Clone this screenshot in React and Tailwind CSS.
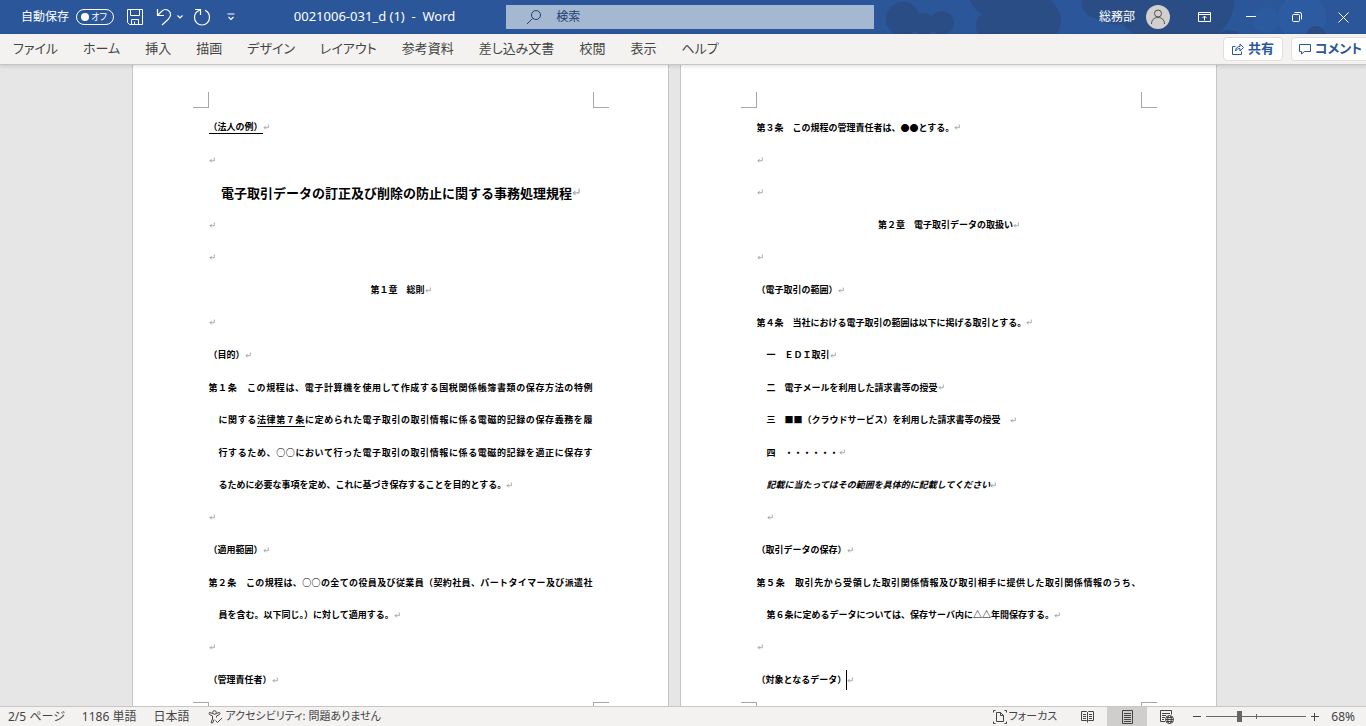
import { useState } from "react";

const TABS = [
  "ファイル",
  "ホーム",
  "挿入",
  "描画",
  "デザイン",
  "レイアウト",
  "参考資料",
  "差し込み文書",
  "校閲",
  "表示",
  "ヘルプ",
];

// full: the line runs on to the next one, so it fills the column
const PAGE_ONE = [
  { text: "（法人の例）", underline: true },
  {},
  { text: "電子取引データの訂正及び削除の防止に関する事務処理規程", title: true },
  {},
  {},
  { text: "第１章　総則", center: true },
  {},
  { text: "（目的）" },
  { text: "第１条　この規程は、電子計算機を使用して作成する国税関係帳簿書類の保存方法の特例", full: true },
  {
    text: (
      <>
        に関する<u className="underline-offset-3">法律第７条</u>に定められた電子取引の取引情報に係る電磁的記録の保存義務を履
      </>
    ),
    full: true,
    indent: true,
  },
  { text: "行するため、○○において行った電子取引の取引情報に係る電磁的記録を適正に保存す", full: true, indent: true },
  { text: "るために必要な事項を定め、これに基づき保存することを目的とする。", indent: true },
  {},
  { text: "（適用範囲）" },
  { text: "第２条　この規程は、○○の全ての役員及び従業員（契約社員、パートタイマー及び派遣社", full: true },
  { text: "員を含む。以下同じ。）に対して適用する。", indent: true },
  {},
  { text: "（管理責任者）" },
];

const PAGE_TWO = [
  { text: "第３条　この規程の管理責任者は、●●とする。" },
  {},
  {},
  { text: "第２章　電子取引データの取扱い", center: true },
  {},
  { text: "（電子取引の範囲）" },
  { text: "第４条　当社における電子取引の範囲は以下に掲げる取引とする。" },
  { text: "一　ＥＤＩ取引", indent: true },
  { text: "二　電子メールを利用した請求書等の授受", indent: true },
  { text: "三　■■（クラウドサービス）を利用した請求書等の授受　", indent: true },
  { text: "四　・・・・・・", indent: true },
  { text: "記載に当たってはその範囲を具体的に記載してください", indent: true, italic: true },
  { indent: true },
  { text: "（取引データの保存）" },
  { text: "第５条　取引先から受領した取引関係情報及び取引相手に提供した取引関係情報のうち、", full: true },
  { text: "第６条に定めるデータについては、保存サーバ内に△△年間保存する。", indent: true },
  {},
  { text: "（対象となるデータ）", caret: true },
];

function Icon({ children, className = "h-4 w-4", box = "0 0 16 16" }) {
  return (
    <svg viewBox={box} className={`shrink-0 ${className}`} fill="none" stroke="currentColor" aria-hidden="true">
      {children}
    </svg>
  );
}

function ReturnMark({ large }) {
  return (
    <svg
      viewBox="0 0 6 6"
      className={`inline-block shrink-0 text-[#8a8a8a] ${large ? "h-2 w-2" : "h-1.5 w-1.5"}`}
      fill="none"
      stroke="currentColor"
      strokeWidth="0.7"
      aria-hidden="true"
    >
      <path d="M5.3 0.5V3.7H1M2.7 2L1 3.7L2.7 5.4" />
    </svg>
  );
}

function Line({ line }) {
  const { text, title, center, full, indent, italic, underline, caret } = line;
  return (
    <p
      className={`flex min-h-6 flex-1 items-center whitespace-pre font-bold text-black ${
        title ? "text-[13px]" : "text-[9px]"
      } ${title || center ? "justify-center" : ""} ${indent ? "pl-2.5" : ""} ${italic ? "italic" : ""}`}
    >
      {text && (
        <span
          className={`${full ? "w-full whitespace-normal [text-align-last:justify]" : ""} ${
            underline ? "border-b border-black leading-3" : ""
          }`}
        >
          {text}
        </span>
      )}
      {caret && <span className="h-5 w-px bg-black" />}
      {!full && <ReturnMark large={title} />}
    </p>
  );
}

function Page({ lines }) {
  return (
    <article className="flex w-[537px] shrink-0 flex-col border-x border-[#c6c6c6] bg-white pr-[59px] pl-[60px]">
      <div className="flex h-[46px] shrink-0 items-end justify-between pb-[3px]">
        <span className="h-4 w-4 border-r border-b border-[#a6a6a6]" />
        <span className="h-4 w-4 border-b border-l border-[#a6a6a6]" />
      </div>
      <div className="flex flex-1 flex-col px-4">
        {lines.map((line, i) => (
          <Line key={i} line={line} />
        ))}
      </div>
      <div className="flex h-[10px] shrink-0 items-end justify-between">
        <span className="h-1 w-4 border-t border-r border-[#a6a6a6]" />
        <span className="h-1 w-4 border-t border-l border-[#a6a6a6]" />
      </div>
    </article>
  );
}

function TitlePattern() {
  return (
    <svg className="absolute top-0 right-0 h-full w-[500px]" viewBox="0 0 500 34" aria-hidden="true">
      <g fill="#2a4d85">
        <circle cx="37" cy="19" r="17" />
        <circle cx="58" cy="24" r="11" />
        <circle cx="76" cy="23" r="12" />
        <path d="M104 0H185Q196 12 195 22Q194 30 190 34H112Q106 22 116 14Q106 8 104 0Z" />
        <path d="M216 0H368Q368 20 352 34H268Q262 30 256 24Q240 26 228 18Q214 12 216 0Z" />
      </g>
      <circle cx="400" cy="20" r="13" fill="#2c5a9f" />
      <circle cx="436" cy="18" r="24" fill="#2c5ba2" />
      <g fill="#2a4d85">
        <circle cx="450" cy="36" r="10" />
        <path d="M352 34Q362 26 374 34Z" />
      </g>
    </svg>
  );
}

function TitleBar({ autosave, setAutosave }) {
  return (
    <header className="relative flex h-[34px] shrink-0 items-center bg-[#2b579a] text-xs text-white">
      <TitlePattern />
      <div className="relative flex flex-1 items-center pl-[21px]">
        <label className="flex items-center gap-[7px]">
          自動保存
          <input
            type="checkbox"
            className="sr-only"
            checked={autosave}
            onChange={(e) => setAutosave(e.target.checked)}
          />
          <span className="flex h-4 w-[38px] items-center justify-between rounded-full border border-white pr-1.5 pl-1 text-[9px]">
            <span className="h-2 w-2 rounded-full bg-white" />
            オフ
          </span>
        </label>
        <button aria-label="上書き保存" className="ml-3">
          <Icon className="h-[18px] w-[18px]" box="0 0 18 18">
            <path d="M1.5 1.5H16.5V16.5H3.5L1.5 14.5ZM4.5 1.5V7.5H13.5V1.5M5.5 16.5V11.5H12.5V16.5M8.5 16.5V13.5" />
          </Icon>
        </button>
        <button aria-label="元に戻す" className="ml-3">
          <Icon className="h-[18px] w-4" box="0 0 16 18">
            <path d="M1.5 1V7.5H8M1.5 7.5L6 3C10 -0.5 15 3 14.5 7C14.3 9 13 10.5 12 11.5L6 17" strokeWidth="1.2" />
          </Icon>
        </button>
        <button aria-label="元に戻す履歴" className="ml-1">
          <Icon className="h-2 w-2" box="0 0 8 8">
            <path d="M1.5 2.5L4 5L6.5 2.5" strokeWidth="1.2" />
          </Icon>
        </button>
        <button aria-label="繰り返し" className="ml-[9px]">
          <Icon className="h-[18px] w-[18px]" box="0 0 18 18">
            <path
              d="M2 1.5H7.5V7M7 2C3.5 3.3 1.5 6 1.5 9.5A7.5 7.5 0 0 0 16.5 9.5C16.5 6 14.5 3.5 12 2.3"
              strokeWidth="1.2"
            />
          </Icon>
        </button>
        <button aria-label="クイック アクセス ツール バーのユーザー設定" className="ml-4">
          <Icon className="h-2 w-2" box="0 0 8 8">
            <path d="M0.5 1H7.5M1.5 4L4 6.5L6.5 4" strokeWidth="1.2" />
          </Icon>
        </button>
        <h1 className="ml-auto pr-[51px] text-[13px] whitespace-pre">0021006-031_d (1)  -  Word</h1>
      </div>
      <label className="relative flex h-6 w-[368px] items-center gap-[14px] bg-[#a5b8d1] pl-5 text-[#1e3f73]">
        <Icon className="h-4 w-4">
          <circle cx="10" cy="6" r="4.5" />
          <path d="M6.5 9.5L1 15" />
        </Icon>
        <input
          type="search"
          aria-label="検索"
          placeholder="検索"
          className="min-w-0 flex-1 bg-transparent outline-none placeholder:text-[#1e3f73]"
        />
      </label>
      <div className="relative flex w-[36%] items-center justify-end pr-[17px]">
        <button className="flex items-center gap-[11px]">
          総務部
          <span className="flex h-6 w-6 items-center justify-center rounded-full bg-[#d2d0ce] text-[#505050]">
            <Icon>
              <circle cx="8" cy="4.5" r="3.5" />
              <path d="M1.5 15C1.5 11 4 8.500 8 8.500S14.5 11 14.5 15" />
            </Icon>
          </span>
        </button>
        <button aria-label="リボンの表示オプション" className="ml-7">
          <Icon className="h-[10px] w-[13px]" box="0 0 13 10">
            <path d="M0.5 0.5H12.5V9.5H0.5ZM0.5 2.5H12.5M6.5 8.5V4.5M4.5 6L6.5 4L8.5 6" />
          </Icon>
        </button>
        <button aria-label="最小化" className="ml-[35px]">
          <Icon className="h-[10px] w-[10px]" box="0 0 10 10">
            <path d="M0 4.5H10" />
          </Icon>
        </button>
        <button aria-label="元に戻す (縮小)" className="ml-9">
          <Icon className="h-[10px] w-[10px]" box="0 0 10 10">
            <rect x="0.5" y="2.5" width="7" height="7" rx="1" />
            <path d="M2.5 0.5H8Q9.5 0.5 9.5 2V7.5" />
          </Icon>
        </button>
        <button aria-label="閉じる" className="ml-9">
          <Icon className="h-[11px] w-[11px]" box="0 0 11 11">
            <path d="M0.5 0.5L10.5 10.5M10.5 0.5L0.5 10.5" />
          </Icon>
        </button>
      </div>
    </header>
  );
}

function RibbonTabs() {
  return (
    <nav className="z-10 flex h-[31px] shrink-0 items-center border-b border-[#c8c6c4] bg-[#f3f2f1] text-[13px] text-[#444] shadow-[0_1px_4px_rgba(0,0,0,0.15)]">
      <div className="flex flex-1 items-center gap-[25px] pl-[13px]">
        {TABS.map((tab) => (
          <button key={tab}>{tab}</button>
        ))}
      </div>
      <div className="flex gap-2 font-bold text-[#2b579a]">
        <button className="flex h-6 w-[60px] items-center justify-center gap-1 rounded-sm border border-[#e1dfdd] bg-white">
          <Icon className="h-3 w-3" box="0 0 12 12">
            <path d="M3.5 3.5H0.5V11.5H9.5V8.5M3.5 8C3.5 5 5.5 3.5 8 3.5V1L11.5 4.5L8 8V5.5C6 5.5 4.5 6.5 3.5 8Z" />
          </Icon>
          共有
        </button>
        <button className="flex h-6 items-center gap-1 rounded-l-sm border border-r-0 border-[#e1dfdd] bg-white pr-1 pl-[7px]">
          <Icon className="h-3 w-3" box="0 0 12 12">
            <path d="M0.5 1.5H11.5V8.5H5.5L2.5 11V8.5H0.5Z" />
          </Icon>
          コメント
        </button>
      </div>
    </nav>
  );
}

function StatusBar({ zoom, setZoom }) {
  return (
    <footer className="flex h-5 shrink-0 items-center border-t border-[#c8c6c4] bg-[#f3f2f1] text-xs text-[#444]">
      <div className="flex flex-1 items-center gap-[17px] pl-2">
        <button>2/5 ページ</button>
        <button>1186 単語</button>
        <button>日本語</button>
        <button className="flex items-center gap-0.5 pl-0.5 text-[11px]">
          <Icon className="h-[14px] w-[15px]" box="0 0 15 14">
            <circle cx="6.5" cy="2.5" r="1.8" />
            <path d="M4.7 3.5L1.5 2.5Q0.5 3.5 1.5 4.5L4.5 6V9L3 12.5Q4 13.5 5 12.5L6 9.5M8.3 3.5L11.5 2.5Q12.5 3.5 11.5 4.5L8.5 6V7.5M7.5 10.5L9.5 12.5L14 8" />
          </Icon>
          アクセシビリティ: 問題ありません
        </button>
      </div>
      <button className="mr-2.5 flex items-center gap-0.5 text-[11px]">
        <Icon className="h-[14px] w-[14px]" box="0 0 14 14">
          <path d="M2.5 0.5H0.5V2.5M11.5 0.5H13.5V2.5M0.5 11.5V13.5H2.5M13.5 11.5V13.5H11.5M3.5 2.5H7.5L10.5 5.5V11.5H3.5ZM7.5 2.5V5.5H10.5" />
        </Icon>
        フォーカス
      </button>
      <button aria-label="閲覧モード" className="flex h-full w-10 items-center justify-center">
        <Icon className="h-[13px] w-[13px]" box="0 0 13 13">
          <path d="M6.5 2.5L5.5 1.5H0.5V10.5H5.5L6.5 11.5L7.5 10.5H12.5V1.5H7.5L6.5 2.5V12.5M2 4.5H5M2 6.5H5M2 8.5H5M8 4.5H11M8 6.5H11M8 8.5H11" />
        </Icon>
      </button>
      <button aria-label="印刷レイアウト" className="flex h-full w-10 items-center justify-center bg-[#d0cecc]">
        <Icon className="h-[14px] w-[11px]" box="0 0 11 14">
          <path d="M0.5 0.5H10.5V13.5H0.5ZM2 3.5H9M2 5.5H9M2 7.5H9M2 9.5H9M2 11.5H9" />
        </Icon>
      </button>
      <button aria-label="Web レイアウト" className="flex h-full w-10 items-center justify-center">
        <Icon className="h-[14px] w-[14px]" box="0 0 14 14">
          <path d="M5 11.5H0.5V0.5H11.5V4.5M2 3.5H10M2 5.5H6M2 7.5H5M2 9.5H4" />
          <circle cx="9.5" cy="9.5" r="4" />
          <ellipse cx="9.5" cy="9.5" rx="1.8" ry="4" />
          <path d="M5.5 9.5H13.5M6.5 7.5H12.5M6.5 11.5H12.5" />
        </Icon>
      </button>
      <button aria-label="縮小" className="ml-1.5">
        <Icon className="h-2 w-2" box="0 0 8 8">
          <path d="M0 3.5H8" />
        </Icon>
      </button>
      <div className="relative mx-[5px] flex h-full w-[100px] items-center">
        <span className="absolute top-[7px] left-1/2 h-[5px] w-px bg-[#666]" />
        <input
          type="range"
          aria-label="ズーム"
          min="10"
          max="190"
          value={zoom}
          onChange={(e) => setZoom(Number(e.target.value))}
          className="relative h-px w-full appearance-none bg-[#666] [&::-webkit-slider-thumb]:h-[11px] [&::-webkit-slider-thumb]:w-[5px] [&::-webkit-slider-thumb]:appearance-none [&::-webkit-slider-thumb]:bg-[#666]"
        />
      </div>
      <button aria-label="拡大">
        <Icon className="h-2 w-2" box="0 0 8 8">
          <path d="M0 3.5H8M3.5 0V8" />
        </Icon>
      </button>
      <button className="mr-[11px] ml-3">{zoom}%</button>
    </footer>
  );
}

export default function App() {
  const [autosave, setAutosave] = useState(false);
  const [zoom, setZoom] = useState(68);

  return (
    <div className="flex h-screen flex-col overflow-hidden font-['Noto_Sans','Noto_Sans_CJK_JP',sans-serif] [font-feature-settings:'palt']">
      <TitleBar autosave={autosave} setAutosave={setAutosave} />
      <RibbonTabs />
      <main className="flex min-h-0 flex-1 justify-center gap-[11px] overflow-hidden bg-[#e6e6e6] pr-[18px] font-['Noto_Sans_CJK_JP',sans-serif] [font-feature-settings:normal]">
        <Page lines={PAGE_ONE} />
        <Page lines={PAGE_TWO} />
      </main>
      <StatusBar zoom={zoom} setZoom={setZoom} />
    </div>
  );
}
